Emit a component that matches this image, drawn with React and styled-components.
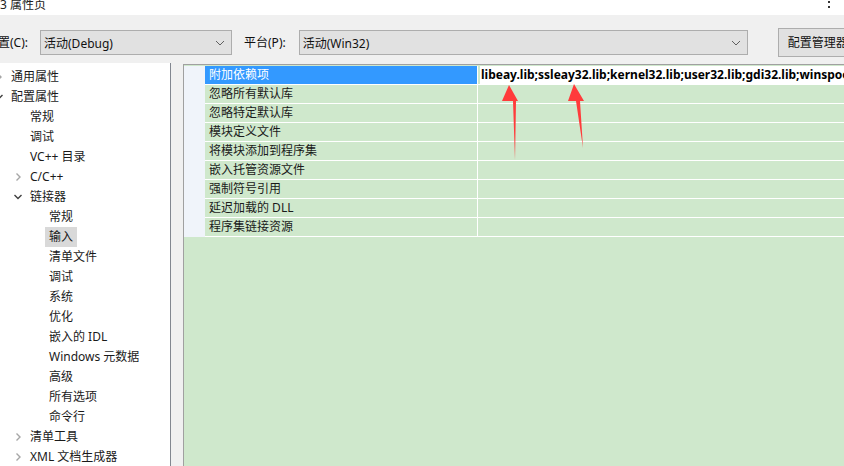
import React from "react";
import styled, { createGlobalStyle } from "styled-components";

const GlobalStyle = createGlobalStyle`
  html, body { margin: 0; padding: 0; overflow: hidden; }
  body {
    background: #f0f0f0;
    font-family: "Noto Sans", "Noto Sans CJK SC", sans-serif;
    font-size: 12px;
    color: #1a1a1a;
  }
`;

const treeItems = [
  { label: "通用属性", level: 0, arrow: "right" },
  { label: "配置属性", level: 0, arrow: "down" },
  { label: "常规", level: 1 },
  { label: "调试", level: 1 },
  { label: "VC++ 目录", level: 1 },
  { label: "C/C++", level: 1, arrow: "right" },
  { label: "链接器", level: 1, arrow: "down" },
  { label: "常规", level: 2 },
  { label: "输入", level: 2, selected: true },
  { label: "清单文件", level: 2 },
  { label: "调试", level: 2 },
  { label: "系统", level: 2 },
  { label: "优化", level: 2 },
  { label: "嵌入的 IDL", level: 2 },
  { label: "Windows 元数据", level: 2 },
  { label: "高级", level: 2 },
  { label: "所有选项", level: 2 },
  { label: "命令行", level: 2 },
  { label: "清单工具", level: 1, arrow: "right" },
  { label: "XML 文档生成器", level: 1, arrow: "right" },
];

const props = [
  "附加依赖项",
  "忽略所有默认库",
  "忽略特定默认库",
  "模块定义文件",
  "将模块添加到程序集",
  "嵌入托管资源文件",
  "强制符号引用",
  "延迟加载的 DLL",
  "程序集链接资源",
];

const Page = styled.div`
  position: relative;
  width: 844px;
  height: 466px;
  display: flex;
  flex-direction: column;
  overflow: hidden;
`;

const TitleBar = styled.div`
  height: 15px;
  flex: none;
  background: #fff;
  display: flex;
  overflow: hidden;
  .title {
    margin-top: -5px;
    line-height: 20px;
    color: #222;
  }
  .close {
    margin: 1px 13px 0 auto;
    width: 1px;
    height: 7px;
    border-left: 2px dotted #333;
  }
`;

const Toolbar = styled.div`
  height: 48px;
  flex: none;
  box-sizing: border-box;
  padding-top: 15px;
  display: flex;
  align-items: flex-start;
`;

const Label = styled.span`
  flex: none;
  margin-left: ${(p) => p.$ml || 0}px;
  line-height: 25px;
  white-space: nowrap;
  color: #111;
`;

const Select = styled.div`
  flex: none;
  box-sizing: border-box;
  width: ${(p) => p.$w}px;
  height: 25px;
  margin-left: ${(p) => p.$ml}px;
  background: #e1e1e1;
  border: 1px solid #adadad;
  display: flex;
  align-items: center;
  padding: 0 6px 0 3px;
  color: #111;
  span { flex: 1; }
  svg { flex: none; }
`;

const Button = styled.div`
  box-sizing: border-box;
  height: 29px;
  margin-top: -2px;
  margin-left: 30px;
  width: 90px;
  flex: none;
  background: #e1e1e1;
  border: 1px solid #adadad;
  padding-left: 9px;
  line-height: 27px;
  white-space: nowrap;
  color: #111;
`;

const Body = styled.div`
  flex: 1;
  display: flex;
  min-height: 0;
`;

const Tree = styled.div`
  width: 171px;
  flex: none;
  box-sizing: border-box;
  background: #fff;
  border-right: 1px solid #828790;
  padding-top: 4px;
  overflow: hidden;
`;

const TreeRow = styled.div`
  height: 20px;
  display: flex;
  align-items: center;
  margin-left: -8px;
  padding-left: ${(p) => p.$level * 19}px;
  white-space: nowrap;
`;

const Chevron = styled.span`
  width: 14px;
  flex: none;
  display: flex;
  justify-content: center;
`;

const TreeLabel = styled.span`
  margin-left: 1px;
  padding: 0 4px;
  line-height: 20px;
  background: ${(p) => (p.$selected ? "#d9d9d9" : "transparent")};
  color: #1a1a1a;
`;

const Grid = styled.div`
  flex: 1;
  margin-left: 12px;
  margin-top: 1px;
  border-left: 1px solid #a0a0a0;
  border-top: 1px solid #a0a0a0;
  background: #cfe8cc;
  padding-top: 1px;
`;

const Row = styled.div`
  display: flex;
  height: 19px;
`;

const Gutter = styled.div`
  width: 21px;
  flex: none;
  background: #f0f4fa;
`;

const NameCell = styled.div`
  width: 273px;
  flex: none;
  box-sizing: border-box;
  padding-left: 4px;
  line-height: 18px;
  border-bottom: 1px solid #fff;
  border-right: 1px solid #fff;
  background: ${(p) => (p.$selected ? "#3399ff" : "transparent")};
  color: ${(p) => (p.$selected ? "#fff" : "#1a1a1a")};
  white-space: nowrap;
`;

const ValueCell = styled.div`
  flex: 1;
  min-width: 0;
  border-bottom: 1px solid #fff;
  display: flex;
  padding-left: 2px;
`;

const EditBox = styled.div`
  flex: 1;
  background: #fff;
  padding-left: 1px;
  line-height: 18px;
  font-weight: 700;
  color: #000;
  white-space: nowrap;
  overflow: hidden;
`;

const Annotation = styled.svg`
  position: absolute;
  left: 0;
  top: 0;
  pointer-events: none;
`;

function ChevronIcon({ dir }) {
  if (dir === "down") {
    return (
      <svg width="10" height="10" viewBox="0 0 10 10">
        <polyline points="1.5,3 5,6.5 8.5,3" fill="none" stroke="#404040" strokeWidth="1.4" />
      </svg>
    );
  }
  return (
    <svg width="10" height="10" viewBox="0 0 10 10">
      <polyline points="3.5,1.5 7,5 3.5,8.5" fill="none" stroke="#a6a6a6" strokeWidth="1.4" />
    </svg>
  );
}

function DropArrow() {
  return (
    <svg width="10" height="10" viewBox="0 0 10 10">
      <polyline points="1,3 5,7 9,3" fill="none" stroke="#606060" strokeWidth="1" />
    </svg>
  );
}

export default function App() {
  return (
    <Page>
      <GlobalStyle />
      <TitleBar>
        <span className="title">3 属性页</span>
        <span className="close" />
      </TitleBar>
      <Toolbar>
        <Label $ml={-2}>置(C):</Label>
        <Select $w={192} $ml={12}>
          <span>活动(Debug)</span>
          <DropArrow />
        </Select>
        <Label $ml={12}>平台(P):</Label>
        <Select $w={449} $ml={13}>
          <span>活动(Win32)</span>
          <DropArrow />
        </Select>
        <Button>配置管理器</Button>
      </Toolbar>
      <Body>
        <Tree>
          {treeItems.map((it, i) => (
            <TreeRow key={i} $level={it.level}>
              <Chevron>{it.arrow && <ChevronIcon dir={it.arrow} />}</Chevron>
              <TreeLabel $selected={it.selected}>{it.label}</TreeLabel>
            </TreeRow>
          ))}
        </Tree>
        <Grid>
          {props.map((name, i) => (
            <Row key={i}>
              <Gutter />
              <NameCell $selected={i === 0}>{name}</NameCell>
              <ValueCell>
                {i === 0 && (
                  <EditBox>libeay.lib;ssleay32.lib;kernel32.lib;user32.lib;gdi32.lib;winspool.lib;comdlg32.lib</EditBox>
                )}
              </ValueCell>
            </Row>
          ))}
        </Grid>
      </Body>
      <Annotation width="844" height="466">
        <polygon points="509,85 518,101 516,101 515,160 513,101 502,101" fill="#ff3b3b" />
        <polygon points="574,84 584,101 580,101 583,148 576,101 568,101" fill="#ff3b3b" />
      </Annotation>
    </Page>
  );
}
